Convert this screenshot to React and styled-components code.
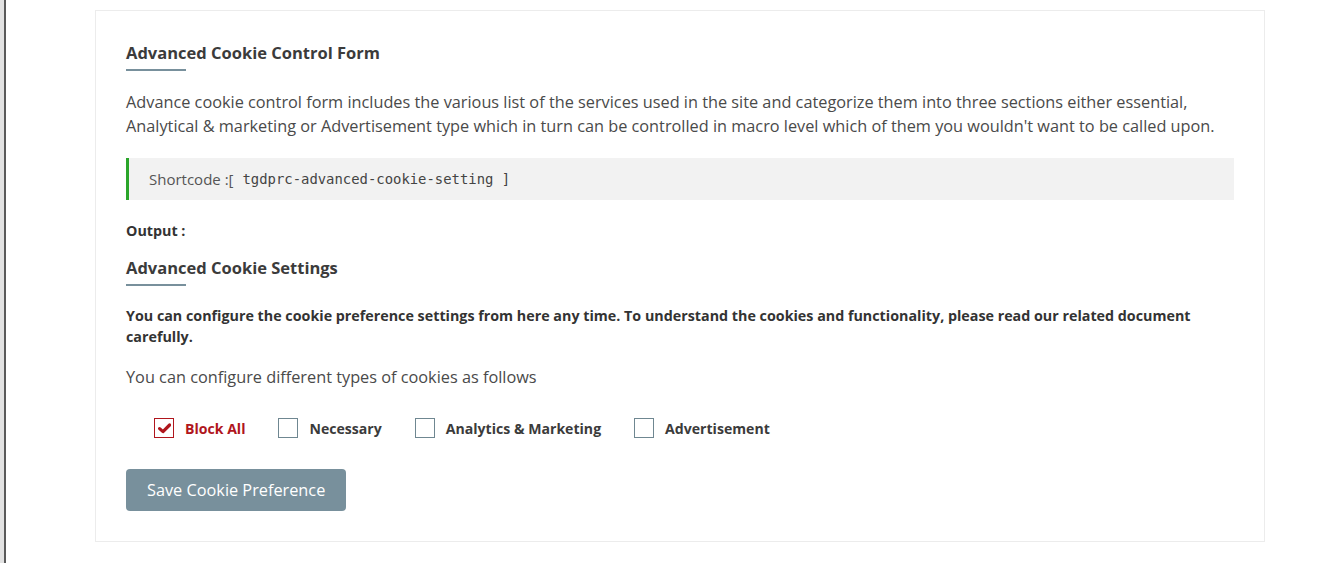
import React, { useState } from 'react';
import styled, { createGlobalStyle } from 'styled-components';

const GlobalStyle = createGlobalStyle`
    html, body {
        margin: 0;
        padding: 0;
        background: #fff;
        font-family: "Open Sans", "Liberation Sans", sans-serif;
    }
`;

const Frame = styled.div`
    min-height: 563px;
    box-sizing: border-box;
    border-left: 4px solid #e2e2e2;
    display: flex;
`;

const Page = styled.div`
    flex: 1;
    border-left: 2px solid #5a5a5a;
    padding: 10px 0 0 89px;
`;

const Card = styled.div`
    width: 1170px;
    box-sizing: border-box;
    border: 1px solid #ececec;
    padding: 30px;
    color: #444;
`;

const Heading = styled.h3`
    margin: 0;
    font-size: 16.5px;
    font-weight: 700;
    color: #3b3b3b;
    line-height: 24px;
    padding-bottom: 6px;
    position: relative;
    margin-bottom: ${p => p.$gap || '19px'};

    &::after {
        content: '';
        position: absolute;
        left: 0;
        bottom: 0;
        width: 60px;
        height: 2px;
        background: #78909c;
    }
`;

const Text = styled.p`
    margin: 0 0 ${p => p.$gap || '0'};
    font-size: ${p => p.$size || '16.3px'};
    font-weight: ${p => p.$bold ? 700 : 400};
    line-height: ${p => p.$lh || '24px'};
    color: ${p => p.$bold ? '#333' : '#4a4a4a'};
`;

const Shortcode = styled.div`
    margin: 20px 0 21px;
    height: 42px;
    display: flex;
    align-items: center;
    background: #f2f2f2;
    border-left: 3px solid #2aa52a;
    padding-left: 20px;
    font-size: 15px;
    color: #555;
`;

const Code = styled.code`
    font-family: "DejaVu Sans Mono", "Liberation Mono", monospace;
    font-size: 13.9px;
    margin-left: 9px;
    color: #444;
`;

const OptionRow = styled.div`
    display: flex;
    align-items: center;
    gap: 33px;
    padding-left: 28px;
    margin: 29px 0 31px;
`;

const Option = styled.label`
    display: flex;
    align-items: center;
    gap: 11px;
    font-size: 14.1px;
    font-weight: 700;
    color: ${p => p.$checked ? '#b0161d' : '#3b3b3b'};
    cursor: pointer;
    user-select: none;
`;

const Box = styled.span`
    width: 20px;
    height: 20px;
    box-sizing: border-box;
    border: 1px solid ${p => p.$checked ? '#b0161d' : '#6f8791'};
    display: flex;
    align-items: center;
    justify-content: center;
`;

const SaveButton = styled.button`
    height: 42px;
    padding: 0 21px;
    border: none;
    border-radius: 4px;
    background: #78909c;
    color: #fff;
    font-family: "Open Sans", "Liberation Sans", sans-serif;
    font-size: 16.3px;
    cursor: pointer;
`;

const options = ['Block All', 'Necessary', 'Analytics & Marketing', 'Advertisement'];

// heavy check like the font-icon one in the reference
const Check = () => (
    <svg width="13" height="11" viewBox="0 0 13 11">
        <path d="M1.6 5.6 L5 8.6 L11.6 2" fill="none" stroke="#b0161d" strokeWidth="3.2" strokeLinecap="round" strokeLinejoin="round" />
    </svg>
);

export default function App() {
    const [checked, setChecked] = useState({ 'Block All': true });

    const toggle = (name) => {
        setChecked({ ...checked, [name]: !checked[name] });
    };

    return (
        <Frame>
            <GlobalStyle />
            <Page>
                <Card>
                    <Heading>Advanced Cookie Control Form</Heading>
                    <Text>
                        Advance cookie control form includes the various list of the services used in the site and categorize them into three sections either essential, Analytical &amp; marketing or Advertisement type which in turn can be controlled in macro level which of them you wouldn't want to be called upon.
                    </Text>
                    <Shortcode>
                        Shortcode :[<Code>tgdprc-advanced-cookie-setting ]</Code>
                    </Shortcode>
                    <Text $size="14.3px" $bold $lh="20px" $gap="15px">Output :</Text>
                    <Heading>Advanced Cookie Settings</Heading>
                    <Text $size="14.3px" $bold $lh="21px" $gap="18px">
                        You can configure the cookie preference settings from here any time. To understand the cookies and functionality, please read our related document carefully.
                    </Text>
                    <Text>You can configure different types of cookies as follows</Text>
                    <OptionRow>
                        { options.map(name => (
                            <Option key={ name } $checked={ checked[name] } onClick={ () => toggle(name) }>
                                <Box $checked={ checked[name] }>{ checked[name] && <Check /> }</Box>
                                { name }
                            </Option>
                        )) }
                    </OptionRow>
                    <SaveButton>Save Cookie Preference</SaveButton>
                </Card>
            </Page>
        </Frame>
    );
}
